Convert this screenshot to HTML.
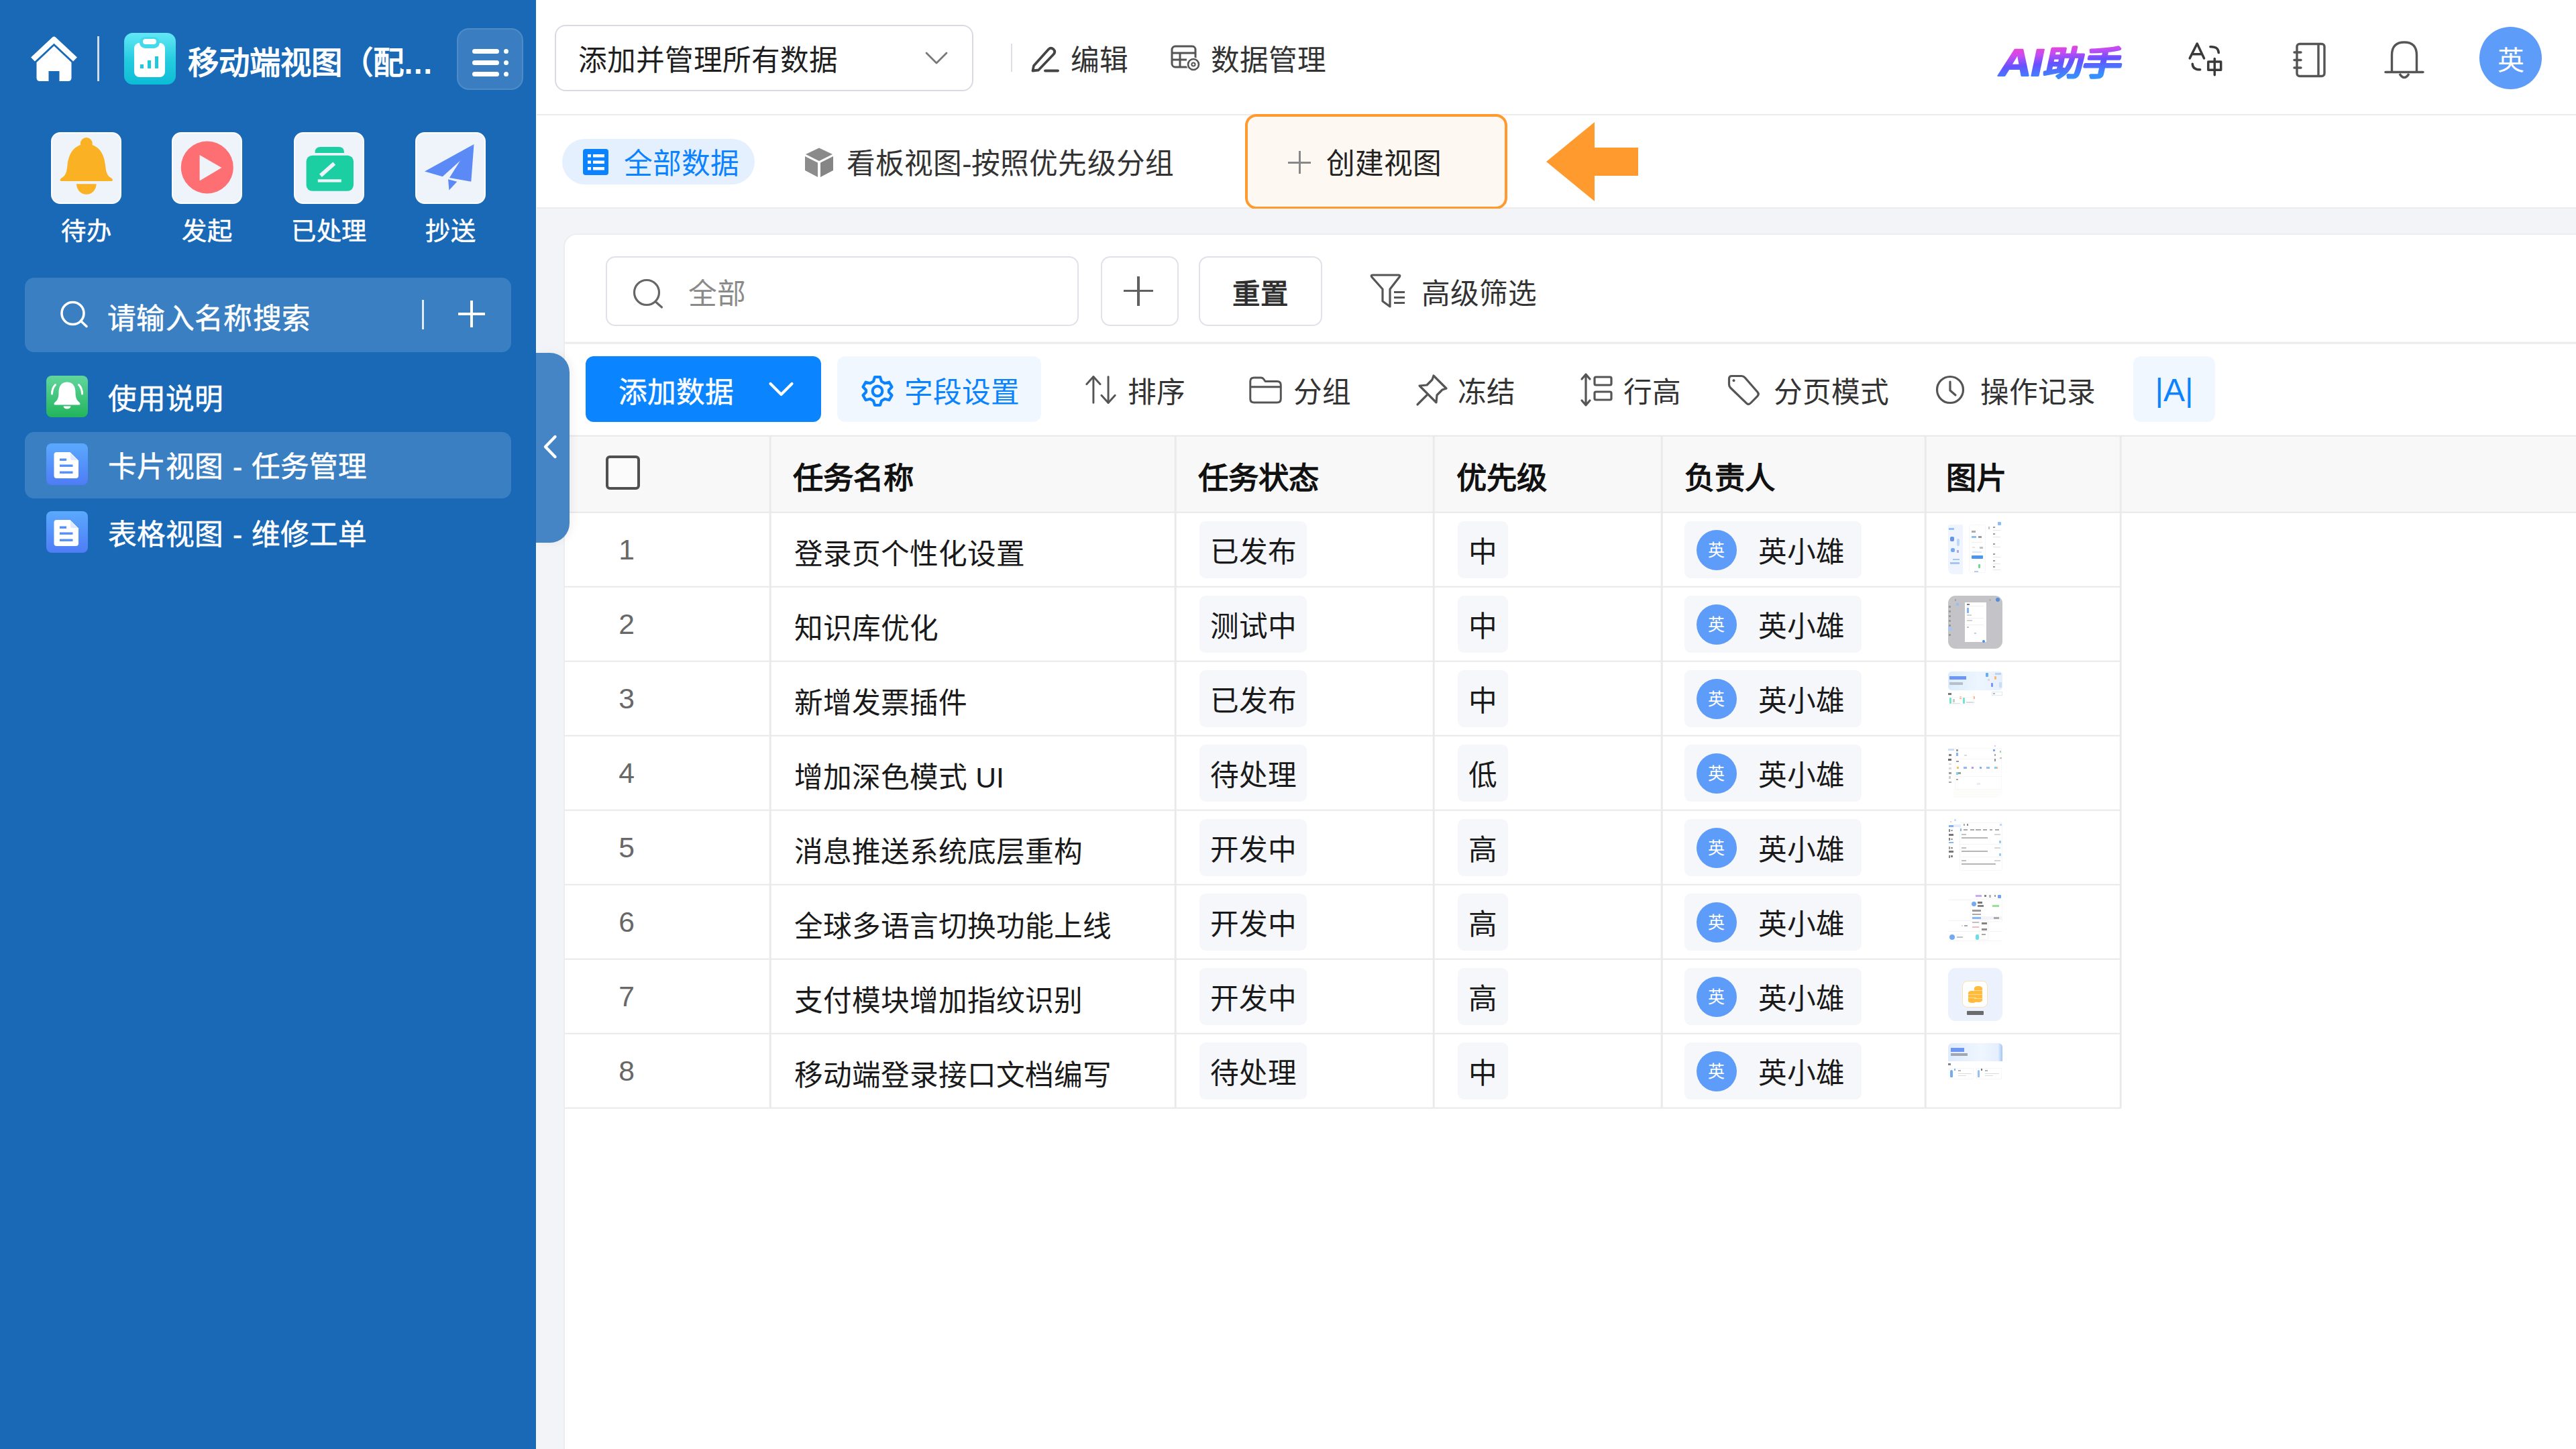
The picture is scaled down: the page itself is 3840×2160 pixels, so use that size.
<!DOCTYPE html>
<html lang="zh-CN">
<head>
<meta charset="utf-8">
<title>移动端视图</title>
<style>
*{box-sizing:border-box;margin:0;padding:0}
html,body{width:3840px;height:2160px;overflow:hidden;background:#fff}
body{font-family:"Liberation Sans",sans-serif;font-size:42.67px;color:#1f1f1f;position:relative;-webkit-font-smoothing:antialiased}
.abs{position:absolute}
.t{position:absolute;white-space:nowrap;line-height:60px;height:60px;margin-top:3px}
svg{position:absolute;overflow:visible}
/* ---------- sidebar ---------- */
#sb{position:absolute;left:0;top:0;width:799px;height:2160px;background:#1969b7;color:#fff;-webkit-text-stroke:.55px #fff}
#sb .ttl{left:280px;top:61px;font-size:46.400px;font-weight:bold;-webkit-text-stroke:0}
#menubtn{left:681px;top:42px;width:99px;height:92px;border-radius:18px;background:rgba(255,255,255,.145);border:2px solid rgba(255,255,255,.10)}
.q{position:absolute;top:197px;width:105px;height:107px;border-radius:14px;background:#eff4fb;border:2px solid #fdfeff}
.ql{position:absolute;top:315px;white-space:nowrap;text-align-last:justify;font-size:37.3px;line-height:60px;height:60px}
#sbsearch{left:37px;top:414px;width:725px;height:111px;border-radius:14px;background:#3b7fc3}
.mi{position:absolute;left:37px;width:725px;height:99px;border-radius:14px}
.mi.on{background:#3b7fc3}
.mi .ic{position:absolute;left:32px;top:17px;width:62px;height:62px;border-radius:8px}
.mi .tx{position:absolute;left:124px;top:22px;line-height:60px;height:60px;white-space:nowrap;word-spacing:2px}
.g1{background:linear-gradient(180deg,#62d69c 0%,#22b45c 100%)}
.g2{background:linear-gradient(180deg,#5aa9fd 0%,#4f7cf6 100%)}
/* ---------- header ---------- */
#hd{position:absolute;left:800px;top:0;width:3040px;height:172px;background:#fff;border-bottom:2px solid #ececee}
#sel{left:827px;top:37px;width:624px;height:99px;border:2px solid #d8dbe4;border-radius:16px;background:#fff}
/* ---------- tabs ---------- */
#tabs{position:absolute;left:800px;top:172px;width:3040px;height:139px;background:#fff;border-bottom:2px solid #ececee}
#pill{left:838px;top:207px;width:287px;height:68px;border-radius:34px;background:#e4f0fe}
#cv{left:1856px;top:170px;width:391px;height:142px;border:4px solid #ff9a2e;border-radius:17px;background:#fef8f2}
/* ---------- content ---------- */
#gut{position:absolute;left:800px;top:311px;width:3040px;height:1849px;background:#f3f4f7}
#card{position:absolute;left:840px;top:348px;width:3010px;height:1830px;background:#fff;border:2px solid #ecedf0;border-radius:20px 0 0 0}
</style>
</head>
<body>
<!-- ================= SIDEBAR ================= -->
<div id="sb">
  <!-- home icon -->
  <svg style="left:44px;top:52px" width="72" height="72" viewBox="44 52 72 72">
    <path d="M49 88.500 L80.500 59 L112 88.500" fill="none" stroke="#fff" stroke-width="8.5" stroke-linejoin="round" stroke-linecap="butt"/>
    <path d="M80.5 68.5 L106.5 93 L106.5 116 Q106.5 121 101.5 121 L88.5 121 L88.5 106 L72.5 106 L72.5 121 L59.5 121 Q54.5 121 54.5 116 L54.5 93 Z" fill="#fff"/>
  </svg>
  <div class="abs" style="left:145px;top:54px;width:3px;height:67px;background:#d3dbe6"></div>
  <!-- app icon -->
  <div class="abs" style="left:185px;top:49px;width:77px;height:77px;border-radius:13px;background:linear-gradient(180deg,#62e8f6 0%,#27cde0 50%,#0cbcd5 100%)">
    <div class="abs" style="left:15px;top:15px;width:46px;height:51px;border-radius:8px;background:#fff"></div>
    <div class="abs" style="left:23px;top:6px;width:30px;height:17px;border-radius:9px;background:#45daeb"></div>
    <div class="abs" style="left:28px;top:9px;width:20px;height:8px;border-radius:4px;background:#fff"></div>
    <div class="abs" style="left:24px;top:47px;width:5px;height:6px;background:#22c8dc"></div>
    <div class="abs" style="left:35px;top:41px;width:5px;height:12px;background:#22c8dc"></div>
    <div class="abs" style="left:46px;top:35px;width:5px;height:18px;background:#22c8dc"></div>
  </div>
  <div class="t ttl" style="width:365.6px;text-align-last:justify">移动端视图（配<span style="letter-spacing:1.500px">...</span></div>
  <div class="abs" id="menubtn">
    <div class="abs" style="left:20.500px;top:28.500px;width:40.500px;height:7px;border-radius:3.500px;background:#fff"></div>
    <div class="abs" style="left:20.500px;top:45.500px;width:40.500px;height:7px;border-radius:3.500px;background:#fff"></div>
    <div class="abs" style="left:20.500px;top:62.500px;width:40.500px;height:7px;border-radius:3.500px;background:#fff"></div>
    <div class="abs" style="left:68px;top:28.500px;width:7px;height:7px;border-radius:3.500px;background:#fff"></div>
    <div class="abs" style="left:68px;top:45.500px;width:7px;height:7px;border-radius:3.500px;background:#fff"></div>
    <div class="abs" style="left:68px;top:62.500px;width:7px;height:7px;border-radius:3.500px;background:#fff"></div>
  </div>

  <!-- quick icons -->
  <div class="q" style="left:76px"></div>
  <div class="q" style="left:256px"></div>
  <div class="q" style="left:438px"></div>
  <div class="q" style="left:619px"></div>
  <svg style="left:0;top:0" width="800" height="320" viewBox="0 0 800 320">
    <!-- bell -->
    <circle cx="128.8" cy="214" r="9" fill="#fbb124"/>
    <path d="M128.8 214 C108 216 102 232 100.5 246 C99.5 256 98 262 92 265 Q89.5 266.5 89.5 268.5 Q89.5 270 92 270 L165.5 270 Q168 270 168 268.5 Q168 266.5 165.5 265 C159.5 262 158 256 157 246 C155.5 232 149.5 216 128.8 214 Z" fill="#fbb124"/>
    <path d="M114 274.3 L143.6 274.3 A14.8 15.4 0 0 1 114 274.3 Z" fill="#fbb124"/>
    <!-- play -->
    <circle cx="308.8" cy="249.5" r="39" fill="#fd6f73"/>
    <path d="M297.6 231 L297.6 269.4 L330.4 250 Z" fill="#eff4fb"/>
    <!-- green -->
    <path d="M469.6 228 L469.6 227 Q469.6 219 478 219 L504.5 219 Q513 219 513 227 L513 228 Z" fill="#1bcfa2"/>
    <rect x="456.6" y="231.7" width="70.4" height="53.1" rx="9" fill="#1bcfa2"/>
    <path d="M476 259.6 L496.4 241.5 L500.2 245.7 L479.8 263.9 Z" fill="#eff4fb"/>
    <rect x="473.8" y="267.3" width="35" height="4.3" fill="#eff4fb"/>
    <!-- plane -->
    <path d="M706.5 215 L633 255.5 L659.7 263.2 L690 236 Z" fill="#5b8af7"/>
    <path d="M706.5 215 L702.3 270.8 L670 265 L686 239.5 Z" fill="#5b8af7"/>
    <path d="M668 267.3 L681.3 270.8 L669.5 283.4 Z" fill="#5b8af7"/>
  </svg>
  <div class="ql" style="left:90.500px;width:75.100px">待办</div>
  <div class="ql" style="left:270.500px;width:75.100px">发起</div>
  <div class="ql" style="left:434px;width:112.400px">已处理</div>
  <div class="ql" style="left:633.500px;width:75.100px">抄送</div>

  <!-- search -->
  <div class="abs" id="sbsearch"></div>
  <svg style="left:88px;top:447px" width="46" height="46" viewBox="0 0 46 46">
    <circle cx="20.5" cy="20" r="16.5" fill="none" stroke="#fff" stroke-width="3.6"/>
    <path d="M32.5 31.5 L41 39.5" stroke="#fff" stroke-width="3.6" stroke-linecap="round"/>
  </svg>
  <div class="t" style="width:303.5px;text-align-last:justify;left:160px;top:442px;letter-spacing:.3px">请输入名称搜索</div>
  <div class="abs" style="left:629px;top:447px;width:3px;height:44px;background:#e3ecf6"></div>
  <div class="abs" style="left:683px;top:466px;width:40px;height:4px;background:#fff"></div>
  <div class="abs" style="left:701px;top:448px;width:4px;height:40px;background:#fff"></div>

  <!-- menu -->
  <div class="mi" style="top:543px">
    <div class="ic g1">
      <svg style="left:0;top:0" width="62" height="62" viewBox="0 0 62 62">
        <path d="M31 9.5 C21 9.500 18.5 18 18.500 25 C18.5 33 16.5 37 12.500 40 Q11.5 41 11.500 42 Q11.5 43.500 13 43.500 L49 43.500 Q50.500 43.500 50.500 42 Q50.500 41 49.500 40 C45.500 37 43.500 33 43.500 25 C43.500 18 41 9.500 31 9.500 Z" fill="#fff"/>
        <path d="M25.500 45.500 L36.500 45.500 Q36 49.500 31 49.500 Q26 49.500 25.500 45.500 Z" fill="#fff"/>
        <path d="M13.500 13.500 Q8.500 19 8.500 27" fill="none" stroke="#fff" stroke-width="3" stroke-linecap="round"/>
        <path d="M48.500 13.500 Q53.500 19 53.500 27" fill="none" stroke="#fff" stroke-width="3" stroke-linecap="round"/>
      </svg>
    </div>
    <div class="tx" style="width:172.4px;text-align-last:justify">使用说明</div>
  </div>
  <div class="mi on" style="top:644px">
    <div class="ic g2">
      <svg style="left:0;top:0" width="62" height="62" viewBox="0 0 62 62">
        <path d="M15.500 13 L35.500 13 L48 25.500 L48 48 Q48 52 44 52 L15.500 52 Q11.500 52 11.500 48 L11.500 17 Q11.500 13 15.500 13 Z" fill="#fff"/>
        <path d="M36 14.500 L36 23 Q36 25 38 25 L46.500 25 Z" fill="#dfeaff"/>
        <rect x="20" y="22.500" width="10" height="3.400" fill="#5590f9"/>
        <rect x="20" y="31.500" width="19.500" height="3.400" fill="#5590f9"/>
        <rect x="20" y="41.500" width="19.500" height="3.400" fill="#5590f9"/>
      </svg>
    </div>
    <div class="tx" style="width:386.3px;text-align-last:justify">卡片视图 - 任务管理</div>
  </div>
  <div class="mi" style="top:745px">
    <div class="ic g2">
      <svg style="left:0;top:0" width="62" height="62" viewBox="0 0 62 62">
        <path d="M15.500 13 L35.500 13 L48 25.500 L48 48 Q48 52 44 52 L15.500 52 Q11.500 52 11.500 48 L11.500 17 Q11.500 13 15.500 13 Z" fill="#fff"/>
        <path d="M36 14.500 L36 23 Q36 25 38 25 L46.500 25 Z" fill="#dfeaff"/>
        <rect x="20" y="22.500" width="10" height="3.400" fill="#5590f9"/>
        <rect x="20" y="31.500" width="19.500" height="3.400" fill="#5590f9"/>
        <rect x="20" y="41.500" width="19.500" height="3.400" fill="#5590f9"/>
      </svg>
    </div>
    <div class="tx" style="width:386.3px;text-align-last:justify">表格视图 - 维修工单</div>
  </div>
</div>

<!-- ================= HEADER ================= -->
<div id="hd"></div>
<div class="abs" id="sel"></div>
<div class="t" style="width:387.4px;text-align-last:justify;left:862px;top:57px">添加并管理所有数据</div>
<svg style="left:1378px;top:76px" width="36" height="22" viewBox="0 0 36 22"><path d="M3 3 L18 18 L33 3" fill="none" stroke="#777" stroke-width="2.800" stroke-linecap="round" stroke-linejoin="round"/></svg>
<div class="abs" style="left:1507px;top:65px;width:2px;height:42px;background:#dcdfe6"></div>
<!-- pencil -->
<svg style="left:1536px;top:65px" width="44" height="44" viewBox="0 0 44 44">
  <path d="M5 33 L27 8.500 Q30.500 5 34.500 8.500 Q38 12 34.500 16 L12 39.500 L3.500 40.500 Z" fill="none" stroke="#444" stroke-width="3.800" stroke-linejoin="round"/>
  <path d="M22 40.500 L41 40.500" stroke="#444" stroke-width="3.800" stroke-linecap="round"/>
</svg>
<div class="t" style="width:86.4px;text-align-last:justify;left:1596px;top:57px;color:#333">编辑</div>
<!-- data mgmt icon -->
<svg style="left:1745px;top:67px" width="46" height="40" viewBox="0 0 46 40">
  <rect x="2" y="2" width="35" height="31" rx="5" fill="none" stroke="#555" stroke-width="3"/>
  <path d="M2 12 L37 12 M2 22 L24 22 M14 12 L14 33" stroke="#555" stroke-width="3" fill="none"/>
  <circle cx="34" cy="29" r="10.500" fill="#fff"/>
  <circle cx="34" cy="29" r="8" fill="none" stroke="#555" stroke-width="2.600"/>
  <circle cx="34" cy="29" r="2.600" fill="none" stroke="#555" stroke-width="2"/>
</svg>
<div class="t" style="width:172.4px;text-align-last:justify;left:1805px;top:57px;color:#333">数据管理</div>

<!-- AI logo -->
<svg style="left:2960px;top:50px" width="230" height="90" viewBox="2960 50 230 90">
  <defs><linearGradient id="aig" x1="0" y1="0.05" x2="0.22" y2="0.95">
    <stop offset="0.08" stop-color="#ff3fc6"/><stop offset="0.36" stop-color="#c44cf2"/><stop offset="0.60" stop-color="#6651ff"/><stop offset="1" stop-color="#3591ff"/></linearGradient></defs>
  <text textLength="157.1" lengthAdjust="spacing" transform="translate(2977,113) skewX(-12) scale(1.17,1)" fill="url(#aig)" stroke="url(#aig)" stroke-width="2.200" stroke-linejoin="round" font-weight="bold" font-family="'Liberation Sans',sans-serif"><tspan font-size="57">AI</tspan><tspan font-size="50" dx="2.500" dy="-1">助手</tspan></text>
</svg>
<!-- translate icon -->
<svg style="left:3260px;top:62px" width="56" height="54" viewBox="0 0 56 54">
  <path d="M4.200 24.900 L15.200 3 L25.600 24.900 M8.400 18.700 L22 18.700" fill="none" stroke="#3a3a3a" stroke-width="3.500" stroke-linecap="round" stroke-linejoin="round"/>
  <path d="M34.900 7.700 Q46.800 7 47.300 16.600" fill="none" stroke="#3a3a3a" stroke-width="3.500" stroke-linecap="round"/>
  <path d="M8.300 33.200 Q8.600 42 19.700 41.800" fill="none" stroke="#3a3a3a" stroke-width="3.500" stroke-linecap="round"/>
  <rect x="31.800" y="30.100" width="18.900" height="12.100" fill="none" stroke="#3a3a3a" stroke-width="3.500" stroke-linejoin="round"/>
  <path d="M41.300 25.600 L41.300 49.800" stroke="#3a3a3a" stroke-width="3.500" stroke-linecap="round"/>
</svg>
<!-- notebook icon -->
<svg style="left:3414px;top:62px" width="56" height="56" viewBox="0 0 56 56">
  <rect x="10" y="3.500" width="41" height="48" rx="4" fill="none" stroke="#555" stroke-width="3.400"/>
  <path d="M42 3.500 L42 51.500" stroke="#555" stroke-width="3.400"/>
  <path d="M6 16 L16 16 M6 27.500 L16 27.500 M6 39 L16 39" stroke="#555" stroke-width="3.400" stroke-linecap="round"/>
</svg>
<!-- bell icon -->
<svg style="left:3552px;top:58px" width="64" height="62" viewBox="0 0 64 62">
  <path d="M13.500 49 L13.500 24 Q13.500 5 32 5 Q50.500 5 50.500 24 L50.500 49" fill="none" stroke="#555" stroke-width="3.400"/>
  <path d="M4 49.500 L60 49.500" stroke="#555" stroke-width="3.400" stroke-linecap="round"/>
  <path d="M25 52 Q32 63 39 52" fill="none" stroke="#555" stroke-width="3.400"/>
</svg>
<div class="abs" style="left:3696px;top:40px;width:93px;height:93px;border-radius:50%;background:#5e9cf9"></div>
<div class="t" style="left:3696px;top:57px;width:93px;text-align:center;color:#fff;font-size:40px">英</div>

<!-- ================= TABS ================= -->
<div id="tabs"></div>
<div class="abs" id="pill"></div>
<svg style="left:869px;top:222px" width="39" height="40" viewBox="0 0 39 40">
  <rect x="0" y="0" width="38" height="39" rx="4" fill="#0b82ff"/>
  <rect x="7" y="8" width="5" height="4.500" fill="#fff"/><rect x="15" y="8" width="17" height="4.500" fill="#fff"/>
  <rect x="7" y="17.500" width="5" height="4.500" fill="#fff"/><rect x="15" y="17.500" width="17" height="4.500" fill="#fff"/>
  <rect x="7" y="27" width="5" height="4.500" fill="#fff"/><rect x="15" y="27" width="17" height="4.500" fill="#fff"/>
</svg>
<div class="t" style="width:172.4px;text-align-last:justify;left:930px;top:211px;color:#0b82ff">全部数据</div>
<svg style="left:1198px;top:219px" width="46" height="46" viewBox="0 0 46 46">
  <path d="M23 1.500 L43 11 L23 21 L3 11 Z" fill="#8a8a8a"/>
  <path d="M2 14 L21 23.500 L21 45 L2 35 Z" fill="#8c8c8c"/>
  <path d="M44 14 L25 23.500 L25 45 L44 35 Z" fill="#858585"/>
</svg>
<div class="t" style="width:487.6px;text-align-last:justify;left:1262px;top:211px;color:#333">看板视图-按照优先级分组</div>
<div class="abs" id="cv"></div>
<div class="abs" style="left:1920px;top:240.500px;width:34px;height:3px;background:#888"></div>
<div class="abs" style="left:1935.500px;top:225px;width:3px;height:34px;background:#888"></div>
<div class="t" style="width:172.4px;text-align-last:justify;left:1977px;top:211px;color:#222">创建视图</div>
<svg style="left:2300px;top:178px" width="150" height="126" viewBox="2300 178 150 126">
  <path d="M2305 241 L2377 182 L2377 220 L2442 220 L2442 262 L2377 262 L2377 300 Z" fill="#ff9a2e"/>
</svg>

<!-- ================= CONTENT ================= -->
<div id="gut"></div>
<div id="card"></div>
<style>
.btn{position:absolute;border:2px solid #dfe2e9;border-radius:14px;background:#fff}
.tb{color:#333}
.hline{position:absolute;height:2.600px;background:#e8e8e8;transform:translateY(-.3px)}
.vline{position:absolute;width:2.600px;background:#eaeaea;transform:translateX(-.3px)}
.th{position:absolute;top:684px;font-size:45.3px;font-weight:bold;color:#111;line-height:60px;height:60px;white-space:nowrap}
.row{position:absolute;left:842px;width:2320px;height:111px}
.row .n{position:absolute;left:0;width:182px;top:26px;text-align:center;color:#686868;line-height:60px;height:60px;padding-left:2px}
.row .nm{position:absolute;left:342px;top:33px;line-height:60px;height:60px;white-space:nowrap;color:#1a1a1a}
.tag{position:absolute;top:14px;height:85px;border-radius:9px;background:#f6f7fa;line-height:60px;padding:16px 0 0 0;text-align:center;white-space:nowrap;color:#1a1a1a}
.pa{position:absolute;left:1686.500px;top:27px;width:60px;height:60px;border-radius:50%;background:#5e9cf9;color:#fff;font-size:25px;line-height:60px;text-align:center}
.pn{position:absolute;left:1779px;top:30px;line-height:60px;height:60px;white-space:nowrap;color:#1a1a1a}
.im{position:absolute;left:2061.500px;top:14px;width:81px;height:79px;border-radius:11px;overflow:hidden;filter:blur(.7px);opacity:.88}
.im i{position:absolute;display:block}
</style>
<!-- filter row -->
<div class="btn" style="left:903px;top:382px;width:705px;height:104px"></div>
<svg style="left:941px;top:414px" width="50" height="48" viewBox="0 0 50 48">
  <circle cx="23" cy="22" r="18.500" fill="none" stroke="#666" stroke-width="3.200"/>
  <path d="M37 36.500 L45.500 44" stroke="#666" stroke-width="3.200" stroke-linecap="round"/>
</svg>
<div class="t" style="width:86.4px;text-align-last:justify;left:1026px;top:405px;color:#8a8a8a">全部</div>
<div class="btn" style="left:1641px;top:382px;width:116px;height:104px"></div>
<div class="abs" style="left:1675px;top:432.300px;width:44px;height:3.200px;background:#606060"></div>
<div class="abs" style="left:1695.400px;top:412px;width:3.200px;height:44px;background:#606060"></div>
<div class="btn" style="left:1787px;top:382px;width:184px;height:104px"></div>
<div class="t" style="left:1837.300px;top:406px;width:83.600px;text-align-last:justify;color:#2e2e2e;-webkit-text-stroke:1.100px #2e2e2e;font-size:41.500px">重置</div>
<svg style="left:2040px;top:404px" width="58" height="60" viewBox="0 0 58 60">
  <path d="M6 6 L45 6 Q48 6 46 9 L32 27 L32 53 L21 45 L21 27 L5 9 Q3 6 6 6 Z" fill="none" stroke="#555" stroke-width="3.200" stroke-linejoin="round"/>
  <path d="M38 31.500 L54 31.500 M38 39.500 L54 39.500 M38 47.500 L54 47.500" stroke="#555" stroke-width="3"/>
</svg>
<div class="t tb" style="width:172.4px;text-align-last:justify;left:2119px;top:405px">高级筛选</div>
<div class="hline" style="left:842px;top:510px;width:2998px;background:#ebebee"></div>

<!-- toolbar -->
<div class="abs" style="left:873px;top:531px;width:351px;height:98px;border-radius:12px;background:#0b84ff"></div>
<div class="t" style="width:172.4px;text-align-last:justify;left:922px;top:552px;color:#fff;-webkit-text-stroke:.45px #fff">添加数据</div>
<svg style="left:1145px;top:568px" width="42" height="26" viewBox="0 0 42 26"><path d="M3.500 4 L19.500 20 L35.500 4" fill="none" stroke="#fff" stroke-width="4.200" stroke-linecap="round" stroke-linejoin="round"/></svg>
<div class="abs" style="left:1248px;top:531px;width:304px;height:98px;border-radius:12px;background:#f0f7ff"></div>
<svg style="left:1282.500px;top:558px" width="50" height="50" viewBox="0 0 50 50">
  <path d="M21 4 L29 4 L31 10.500 L36 13.300 L42.500 11.700 L46.500 18.700 L42 23.500 L42 26.500 L46.500 31.300 L42.500 38.300 L36 36.700 L31 39.500 L29 46 L21 46 L19 39.500 L14 36.700 L7.500 38.300 L3.500 31.300 L8 26.500 L8 23.500 L3.500 18.700 L7.500 11.700 L14 13.300 L19 10.500 Z" fill="none" stroke="#0b83ff" stroke-width="4.200" stroke-linejoin="round"/>
  <circle cx="25" cy="25" r="7.300" fill="none" stroke="#0b83ff" stroke-width="4.200"/>
</svg>
<div class="t" style="width:172.4px;text-align-last:justify;left:1348px;top:552px;color:#0b83ff">字段设置</div>
<!-- sort -->
<svg style="left:1616px;top:557px" width="50" height="48" viewBox="0 0 54 52">
  <path d="M4 17 L15 5 L15 47" fill="none" stroke="#555" stroke-width="3.200" stroke-linecap="round" stroke-linejoin="round"/>
  <path d="M15 5 L26 17" fill="none" stroke="#555" stroke-width="3.200" stroke-linecap="round"/>
  <path d="M28 35 L39 47 L39 5" fill="none" stroke="#555" stroke-width="3.200" stroke-linecap="round" stroke-linejoin="round"/>
  <path d="M39 47 L50 35" fill="none" stroke="#555" stroke-width="3.200" stroke-linecap="round"/>
</svg>
<div class="t tb" style="width:86.4px;text-align-last:justify;left:1681px;top:552px">排序</div>
<!-- group -->
<svg style="left:1861px;top:559px" width="52" height="45" viewBox="0 0 56 48">
  <path d="M3 14 L3 10 Q3 4 9 4 L20 4 Q23 4 25 7 L27 10 L46 10 Q52 10 52 16 L52 38 Q52 44 46 44 L9 44 Q3 44 3 38 Z" fill="none" stroke="#555" stroke-width="3.200" stroke-linejoin="round"/>
  <path d="M3 19 L52 19" stroke="#555" stroke-width="3.200"/>
</svg>
<div class="t tb" style="width:86.4px;text-align-last:justify;left:1928px;top:552px">分组</div>
<!-- pin -->
<svg style="left:2108px;top:556px" width="52" height="52" viewBox="0 0 52 52">
  <path d="M29 4 L48 23 L42 25 L34 33 L33 44 L8 19 L19 18 L27 10 Z" fill="none" stroke="#555" stroke-width="3.200" stroke-linejoin="round"/>
  <path d="M20 32 L5 47" stroke="#555" stroke-width="3.200" stroke-linecap="round"/>
</svg>
<div class="t tb" style="width:86.4px;text-align-last:justify;left:2173px;top:552px">冻结</div>
<!-- row height -->
<svg style="left:2355px;top:555px" width="52" height="52" viewBox="0 0 52 52">
  <path d="M9 4 L9 48 M3 10 L9 3 L15 10 M3 42 L9 49 L15 42" fill="none" stroke="#555" stroke-width="3.200" stroke-linecap="round" stroke-linejoin="round"/>
  <rect x="22" y="7" width="25" height="12" rx="2" fill="none" stroke="#555" stroke-width="3.200"/>
  <rect x="22" y="29" width="25" height="12" rx="2" fill="none" stroke="#555" stroke-width="3.200"/>
</svg>
<div class="t tb" style="width:86.4px;text-align-last:justify;left:2420px;top:552px">行高</div>
<!-- tag -->
<svg style="left:2573px;top:556px" width="52" height="52" viewBox="0 0 52 52">
  <path d="M8.500 4.500 L23 4.500 Q26 4.500 28 6.800 L47 28.500 Q49.500 31.500 47 34.300 L36.500 45 Q33.500 48 30.500 45.200 L6.500 22 Q4.500 20 4.500 17 L4.500 8.500 Q4.500 4.500 8.500 4.500 Z" fill="none" stroke="#555" stroke-width="3.200" stroke-linejoin="round"/>
  <circle cx="11.500" cy="11.200" r="2" fill="#555"/>
</svg>
<div class="t tb" style="width:172.4px;text-align-last:justify;left:2644px;top:552px">分页模式</div>
<!-- clock -->
<svg style="left:2884px;top:558px" width="46" height="46" viewBox="0 0 46 46">
  <circle cx="23" cy="23" r="19.500" fill="none" stroke="#555" stroke-width="3.200"/>
  <path d="M23 11 L23 24 L31 31" fill="none" stroke="#555" stroke-width="3.200" stroke-linecap="round" stroke-linejoin="round"/>
</svg>
<div class="t tb" style="width:172.4px;text-align-last:justify;left:2952px;top:552px">操作记录</div>
<div class="abs" style="left:3180px;top:531px;width:122px;height:98px;border-radius:12px;background:#f0f7ff"></div>
<div class="t" style="left:3180px;top:549px;width:122px;text-align:center;color:#0b83ff;font-size:48px">|A|</div>

<!-- table -->
<div class="abs" style="left:842px;top:650px;width:2998px;height:113px;background:#f8f8f8"></div>
<div class="hline" style="left:842px;top:648.500px;width:2998px"></div>
<div class="hline" style="left:842px;top:762.500px;width:2998px"></div>
<div class="abs" style="left:903px;top:679px;width:51px;height:51px;border:4px solid #505050;border-radius:6px;background:#fbfbfb"></div>
<div class="th" style="width:180.4px;text-align-last:justify;left:1182px">任务名称</div>
<div class="th" style="width:180.4px;text-align-last:justify;left:1786px">任务状态</div>
<div class="th" style="width:135.4px;text-align-last:justify;left:2171px">优先级</div>
<div class="th" style="width:135.4px;text-align-last:justify;left:2511px">负责人</div>
<div class="th" style="width:90.4px;text-align-last:justify;left:2901px">图片</div>
<div class="row" style="top:763px"><div class="n">1</div><div class="nm" style="width:344.4px;text-align-last:justify">登录页个性化设置</div><div class="tag" style="left:946px;width:160px;padding:16px 15.800px 0 15.800px;text-align-last:justify">已发布</div><div class="tag" style="left:1331px;width:74.500px">中</div><div class="tag" style="left:1669px;width:264px"></div><div class="pa">英</div><div class="pn" style="width:129.4px;text-align-last:justify">英小雄</div><div class="im" id="im1" style="opacity:.72;border-radius:0;top:14px"><i style="left:0px;top:5px;width:22px;height:74px;background:#e9f1fe;border-radius:3px 0 0 8px"></i><i style="left:1px;top:10px;width:8px;height:3px;background:#69a8f6;"></i><i style="left:3px;top:23px;width:6px;height:7px;background:#2b6de0;border-radius:2px"></i><i style="left:13px;top:26px;width:4px;height:11px;background:#a3cdf6;border-radius:2px"></i><i style="left:4px;top:40px;width:6px;height:6px;background:#3d8bef;border-radius:2px"></i><i style="left:13px;top:43px;width:3px;height:4px;background:#8e8ad8;"></i><i style="left:7px;top:56px;width:10px;height:2px;background:#7eb2f5;"></i><i style="left:3px;top:61px;width:14px;height:3px;background:#7eb2f5;"></i><i style="left:31px;top:5px;width:25px;height:72px;background:#fff;border:1px solid #f1f3f6;border-radius:2px"></i><i style="left:35px;top:14px;width:6px;height:3px;background:#8d8d8d;"></i><i style="left:35px;top:22px;width:7px;height:3px;background:#62a4f6;"></i><i style="left:45px;top:22px;width:5px;height:3px;background:#777;"></i><i style="left:35px;top:31px;width:16px;height:1px;background:#ececec;"></i><i style="left:36px;top:38px;width:4px;height:2px;background:#ddd;"></i><i style="left:47px;top:38px;width:5px;height:3px;background:#aaa;"></i><i style="left:36px;top:45px;width:14px;height:2px;background:#cfe0f7;"></i><i style="left:35px;top:51px;width:17px;height:5px;background:#0a6fe8;border-radius:1px"></i><i style="left:45px;top:64px;width:3px;height:6px;background:#3ecb6c;border-radius:1px"></i><i style="left:39px;top:74px;width:6px;height:2px;background:#8dbcf6;"></i><i style="left:67px;top:8px;width:3px;height:2px;background:#777;"></i><i style="left:67px;top:13px;width:11px;height:1px;background:#dcdcdc;"></i><i style="left:67px;top:18px;width:3px;height:2px;background:#777;"></i><i style="left:67px;top:23px;width:11px;height:1px;background:#dcdcdc;"></i><i style="left:67px;top:33px;width:3px;height:2px;background:#777;"></i><i style="left:67px;top:38px;width:11px;height:1px;background:#dcdcdc;"></i><i style="left:67px;top:48px;width:3px;height:2px;background:#777;"></i><i style="left:67px;top:53px;width:11px;height:1px;background:#dcdcdc;"></i><i style="left:67px;top:58px;width:3px;height:2px;background:#777;"></i><i style="left:67px;top:63px;width:11px;height:1px;background:#dcdcdc;"></i><i style="left:67px;top:67px;width:3px;height:2px;background:#777;"></i><i style="left:67px;top:72px;width:11px;height:1px;background:#dcdcdc;"></i><i style="left:74px;top:1px;width:5px;height:5px;background:#62a4f6;border-radius:1px"></i><i style="left:60px;top:8px;width:2px;height:4px;background:#aaa;"></i></div></div>
<div class="hline" style="left:842px;top:873.5px;width:2320px"></div>
<div class="row" style="top:874px"><div class="n">2</div><div class="nm" style="width:215.4px;text-align-last:justify">知识库优化</div><div class="tag" style="left:946px;width:160px;padding:16px 15.800px 0 15.800px;text-align-last:justify">测试中</div><div class="tag" style="left:1331px;width:74.500px">中</div><div class="tag" style="left:1669px;width:264px"></div><div class="pa">英</div><div class="pn" style="width:129.4px;text-align-last:justify">英小雄</div><div class="im" id="im2" style="top:14px"><i style="left:0px;top:0px;width:81px;height:79px;background:#bcbdc1;"></i><i style="left:25px;top:10px;width:32px;height:59px;background:#fff;"></i><i style="left:71px;top:3px;width:6px;height:6px;background:#3f7fd6;border-radius:3px"></i><i style="left:51px;top:66px;width:4px;height:4px;background:#2f80ed;border-radius:2px"></i><i style="left:39px;top:55px;width:3px;height:2px;background:#a9c9f6;"></i><i style="left:1px;top:15px;width:3px;height:3px;background:#8a8b90;"></i><i style="left:1px;top:22px;width:3px;height:3px;background:#8a8b90;"></i><i style="left:1px;top:29px;width:3px;height:3px;background:#8a8b90;"></i><i style="left:1px;top:36px;width:3px;height:3px;background:#8a8b90;"></i><i style="left:1px;top:43px;width:3px;height:3px;background:#8a8b90;"></i><i style="left:1px;top:57px;width:3px;height:3px;background:#8a8b90;"></i><i style="left:0px;top:47px;width:6px;height:5px;background:#9dbdf0;"></i><i style="left:12px;top:11px;width:4px;height:4px;background:#8fb4ee;"></i><i style="left:10px;top:5px;width:2px;height:3px;background:#999;"></i><i style="left:61px;top:5px;width:3px;height:3px;background:#aaa;"></i><i style="left:28px;top:12px;width:4px;height:2px;background:#666;"></i><i style="left:28px;top:18px;width:3px;height:8px;background:#73a9f6;"></i><i style="left:28px;top:28px;width:7px;height:2px;background:#ccc;"></i><i style="left:28px;top:36px;width:8px;height:2px;background:#ccc;"></i><i style="left:28px;top:46px;width:3px;height:2px;background:#bbb;"></i><i style="left:27px;top:15px;width:26px;height:1px;background:#eee;"></i><i style="left:27px;top:33px;width:26px;height:1px;background:#eee;"></i><i style="left:27px;top:43px;width:26px;height:1px;background:#eee;"></i></div></div>
<div class="hline" style="left:842px;top:984.5px;width:2320px"></div>
<div class="row" style="top:985px"><div class="n">3</div><div class="nm" style="width:258.4px;text-align-last:justify">新增发票插件</div><div class="tag" style="left:946px;width:160px;padding:16px 15.800px 0 15.800px;text-align-last:justify">已发布</div><div class="tag" style="left:1331px;width:74.500px">中</div><div class="tag" style="left:1669px;width:264px"></div><div class="pa">英</div><div class="pn" style="width:129.4px;text-align-last:justify">英小雄</div><div class="im" id="im3" style="opacity:.72;border-radius:0;top:15px"><i style="left:0px;top:1px;width:81px;height:28px;background:linear-gradient(90deg,#cfe6fc 0%,#e6f3fe 55%,#dfeafd 100%);border-radius:5px"></i><i style="left:2px;top:8px;width:25px;height:5px;background:#3a6ff0;"></i><i style="left:2px;top:17px;width:20px;height:4px;background:#9aa7b8;"></i><i style="left:56px;top:3px;width:4px;height:6px;background:#2f8df0;border-radius:1px"></i><i style="left:69px;top:8px;width:3px;height:5px;background:#f5a040;border-radius:1px"></i><i style="left:64px;top:18px;width:3px;height:6px;background:#4a6cf0;border-radius:1px"></i><i style="left:70px;top:3px;width:9px;height:3px;background:#9dc3f7;"></i><i style="left:59px;top:12px;width:3px;height:3px;background:#d8c8c0;"></i><i style="left:76px;top:17px;width:4px;height:8px;background:#b8d0ee;"></i><i style="left:0px;top:33px;width:5px;height:3px;background:#444;"></i><i style="left:65px;top:31px;width:16px;height:6px;background:#fff;border:1px solid #cfe1fa"></i><i style="left:67px;top:33px;width:3px;height:2px;background:#999;"></i><i style="left:2px;top:40px;width:3px;height:9px;background:#40d9c0;border-radius:1px"></i><i style="left:22px;top:40px;width:3px;height:9px;background:#40d9c0;border-radius:1px"></i><i style="left:17px;top:38px;width:3px;height:4px;background:#ff9560;border-radius:1px"></i><i style="left:37px;top:38px;width:3px;height:4px;background:#ff9560;border-radius:1px"></i><i style="left:7px;top:42px;width:3px;height:5px;background:#bbb;"></i><i style="left:6px;top:48px;width:12px;height:1px;background:#ccc;"></i><i style="left:27px;top:46px;width:12px;height:2px;background:#ccc;"></i><i style="left:1px;top:39px;width:37px;height:12px;background:transparent;border:1px solid #f4f4f4"></i></div></div>
<div class="hline" style="left:842px;top:1095.5px;width:2320px"></div>
<div class="row" style="top:1096px"><div class="n">4</div><div class="nm" style="width:312.9px;text-align-last:justify">增加深色模式 UI</div><div class="tag" style="left:946px;width:160px;padding:16px 15.800px 0 15.800px;text-align-last:justify">待处理</div><div class="tag" style="left:1331px;width:74.500px">低</div><div class="tag" style="left:1669px;width:264px"></div><div class="pa">英</div><div class="pn" style="width:129.4px;text-align-last:justify">英小雄</div><div class="im" id="im4" style="opacity:.72;border-radius:0;top:15px"><i style="left:10px;top:4px;width:70px;height:62px;background:#fff;border:1px solid #f6f6f6"></i><i style="left:8px;top:66px;width:73px;height:12px;background:#fbfbfa;border-radius:0 0 10px 0"></i><i style="left:0px;top:5px;width:9px;height:3px;background:#b8d4f8;"></i><i style="left:1px;top:13px;width:4px;height:3px;background:#555;"></i><i style="left:0px;top:20px;width:5px;height:3px;background:#333;"></i><i style="left:1px;top:27px;width:4px;height:2px;background:#ccc;"></i><i style="left:1px;top:33px;width:4px;height:3px;background:#ccc;"></i><i style="left:1px;top:40px;width:4px;height:3px;background:#777;"></i><i style="left:1px;top:46px;width:3px;height:4px;background:#bbb;"></i><i style="left:1px;top:54px;width:4px;height:2px;background:#888;"></i><i style="left:12px;top:6px;width:3px;height:3px;background:#777;"></i><i style="left:12px;top:11px;width:3px;height:5px;background:#5a96f0;"></i><i style="left:24px;top:14px;width:4px;height:2px;background:#ccc;"></i><i style="left:12px;top:23px;width:4px;height:2px;background:#777;"></i><i style="left:10px;top:20px;width:70px;height:1px;background:#f3f3f3;"></i><i style="left:10px;top:46px;width:70px;height:1px;background:#f3f3f3;"></i><i style="left:13px;top:32px;width:3px;height:3px;background:#f5a623;"></i><i style="left:23px;top:32px;width:5px;height:3px;background:#6c9cf5;"></i><i style="left:35px;top:32px;width:3px;height:3px;background:#9b6cf0;"></i><i style="left:47px;top:32px;width:3px;height:3px;background:#5a8cf5;"></i><i style="left:57px;top:32px;width:5px;height:3px;background:#7aa6f5;"></i><i style="left:69px;top:32px;width:3px;height:3px;background:#40c8d8;"></i><i style="left:72px;top:32px;width:2px;height:3px;background:#f59a70;"></i><i style="left:12px;top:40px;width:3px;height:4px;background:#40c8e8;"></i><i style="left:15px;top:40px;width:4px;height:3px;background:#777;"></i><i style="left:12px;top:50px;width:3px;height:2px;background:#888;"></i><i style="left:43px;top:56px;width:5px;height:3px;background:#dbe7f8;"></i><i style="left:67px;top:6px;width:3px;height:3px;background:#4a8cf0;"></i><i style="left:77px;top:8px;width:2px;height:3px;background:#6fd86f;"></i><i style="left:69px;top:-1px;width:2px;height:3px;background:#d8a8f5;"></i><i style="left:69px;top:13px;width:2px;height:3px;background:#888;"></i><i style="left:69px;top:20px;width:2px;height:4px;background:#666;"></i><i style="left:77px;top:18px;width:3px;height:2px;background:#aaa;"></i></div></div>
<div class="hline" style="left:842px;top:1206.5px;width:2320px"></div>
<div class="row" style="top:1207px"><div class="n">5</div><div class="nm" style="width:430.4px;text-align-last:justify">消息推送系统底层重构</div><div class="tag" style="left:946px;width:160px;padding:16px 15.800px 0 15.800px;text-align-last:justify">开发中</div><div class="tag" style="left:1331px;width:74.500px">高</div><div class="tag" style="left:1669px;width:264px"></div><div class="pa">英</div><div class="pn" style="width:129.4px;text-align-last:justify">英小雄</div><div class="im" id="im5" style="opacity:.72;border-radius:0;top:13px"><i style="left:17px;top:6px;width:64px;height:72px;background:#fff;border:1px solid #f1f3f7;border-radius:2px"></i><i style="left:1px;top:10px;width:7px;height:3px;background:#4a90f0;"></i><i style="left:8px;top:9px;width:11px;height:4px;background:#dbe9fc;"></i><i style="left:1px;top:16px;width:2px;height:4px;background:#555;"></i><i style="left:4px;top:17px;width:3px;height:2px;background:#888;"></i><i style="left:1px;top:23px;width:7px;height:3px;background:#444;"></i><i style="left:1px;top:29px;width:2px;height:4px;background:#555;"></i><i style="left:4px;top:30px;width:3px;height:2px;background:#888;"></i><i style="left:1px;top:35px;width:7px;height:2px;background:#5a9cf5;"></i><i style="left:1px;top:42px;width:2px;height:4px;background:#777;"></i><i style="left:4px;top:43px;width:3px;height:2px;background:#666;"></i><i style="left:1px;top:48px;width:7px;height:3px;background:#444;"></i><i style="left:1px;top:55px;width:2px;height:4px;background:#555;"></i><i style="left:4px;top:55px;width:3px;height:3px;background:#555;"></i><i style="left:9px;top:1px;width:3px;height:3px;background:#b8d4f8;"></i><i style="left:3px;top:4px;width:2px;height:2px;background:#ccc;"></i><i style="left:23px;top:8px;width:2px;height:3px;background:#888;"></i><i style="left:28px;top:8px;width:2px;height:3px;background:#666;"></i><i style="left:77px;top:8px;width:3px;height:3px;background:#a8c8f8;"></i><i style="left:23px;top:16px;width:6px;height:2px;background:#8a8a8a;"></i><i style="left:33px;top:16px;width:6px;height:2px;background:#8a8a8a;"></i><i style="left:41px;top:16px;width:8px;height:2px;background:#8a8a8a;"></i><i style="left:52px;top:16px;width:6px;height:2px;background:#8a8a8a;"></i><i style="left:62px;top:16px;width:4px;height:2px;background:#8a8a8a;"></i><i style="left:70px;top:16px;width:6px;height:2px;background:#8a8a8a;"></i><i style="left:18px;top:15px;width:2px;height:4px;background:#5a9cf5;"></i><i style="left:20px;top:23px;width:7px;height:2px;background:#aaa;"></i><i style="left:69px;top:23px;width:9px;height:2px;background:#c8c8c8;"></i><i style="left:20px;top:28px;width:39px;height:2px;background:#999;"></i><i style="left:20px;top:43px;width:7px;height:2px;background:#aaa;"></i><i style="left:69px;top:43px;width:9px;height:2px;background:#c8c8c8;"></i><i style="left:20px;top:48px;width:39px;height:2px;background:#999;"></i><i style="left:20px;top:62px;width:7px;height:2px;background:#aaa;"></i><i style="left:69px;top:62px;width:9px;height:2px;background:#c8c8c8;"></i><i style="left:20px;top:67px;width:51px;height:2px;background:#999;"></i><i style="left:76px;top:33px;width:3px;height:4px;background:#7aaef5;border-radius:1px"></i><i style="left:76px;top:52px;width:3px;height:4px;background:#7aaef5;border-radius:1px"></i><i style="left:18px;top:38px;width:62px;height:1px;background:#eef0f4;"></i><i style="left:18px;top:57px;width:62px;height:1px;background:#eef0f4;"></i></div></div>
<div class="hline" style="left:842px;top:1317.5px;width:2320px"></div>
<div class="row" style="top:1318px"><div class="n">6</div><div class="nm" style="width:473.4px;text-align-last:justify">全球多语言切换功能上线</div><div class="tag" style="left:946px;width:160px;padding:16px 15.800px 0 15.800px;text-align-last:justify">开发中</div><div class="tag" style="left:1331px;width:74.500px">高</div><div class="tag" style="left:1669px;width:264px"></div><div class="pa">英</div><div class="pn" style="width:129.4px;text-align-last:justify">英小雄</div><div class="im" id="im6" style="opacity:.72;border-radius:0;top:14px"><i style="left:41px;top:2px;width:9px;height:3px;background:#b08cf5;"></i><i style="left:54px;top:2px;width:3px;height:3px;background:#555;"></i><i style="left:61px;top:2px;width:3px;height:4px;background:#999;"></i><i style="left:69px;top:2px;width:2px;height:3px;background:#777;"></i><i style="left:74px;top:2px;width:5px;height:5px;background:#3d7fe8;border-radius:1px"></i><i style="left:1px;top:9px;width:80px;height:1px;background:#eee;"></i><i style="left:1px;top:40px;width:80px;height:1px;background:#eee;"></i><i style="left:34px;top:9px;width:46px;height:32px;background:#fff;box-shadow:0 0 3px rgba(0,0,0,.12)"></i><i style="left:35px;top:12px;width:7px;height:7px;background:#3d8bf0;border-radius:4px"></i><i style="left:44px;top:12px;width:7px;height:3px;background:#444;"></i><i style="left:44px;top:17px;width:9px;height:3px;background:#555;"></i><i style="left:66px;top:17px;width:10px;height:3px;background:#6fd86f;"></i><i style="left:36px;top:24px;width:13px;height:3px;background:#777;"></i><i style="left:36px;top:30px;width:13px;height:2px;background:#888;"></i><i style="left:35px;top:34px;width:45px;height:5px;background:#eef1f5;"></i><i style="left:36px;top:35px;width:13px;height:3px;background:#5a9cf5;"></i><i style="left:68px;top:35px;width:8px;height:3px;background:#8a8a8a;"></i><i style="left:47px;top:41px;width:12px;height:27px;background:#fff;box-shadow:0 0 3px rgba(0,0,0,.14)"></i><i style="left:36px;top:42px;width:10px;height:2px;background:#aaa;"></i><i style="left:50px;top:43px;width:8px;height:3px;background:#555;"></i><i style="left:50px;top:52px;width:8px;height:3px;background:#666;"></i><i style="left:50px;top:60px;width:6px;height:2px;background:#888;"></i><i style="left:36px;top:49px;width:10px;height:2px;background:#f5a0a0;"></i><i style="left:20px;top:47px;width:2px;height:2px;background:#ccc;"></i><i style="left:24px;top:47px;width:5px;height:2px;background:#888;"></i><i style="left:1px;top:56px;width:80px;height:1px;background:#f1f1f1;"></i><i style="left:2px;top:61px;width:8px;height:8px;background:#3d8bf0;border-radius:4px"></i><i style="left:13px;top:64px;width:9px;height:2px;background:#aaa;"></i><i style="left:41px;top:61px;width:5px;height:8px;background:#30d5e0;border-radius:2px"></i><i style="left:1px;top:70px;width:80px;height:1px;background:#f1f1f1;"></i></div></div>
<div class="hline" style="left:842px;top:1428.5px;width:2320px"></div>
<div class="row" style="top:1429px"><div class="n">7</div><div class="nm" style="width:430.4px;text-align-last:justify">支付模块增加指纹识别</div><div class="tag" style="left:946px;width:160px;padding:16px 15.800px 0 15.800px;text-align-last:justify">开发中</div><div class="tag" style="left:1331px;width:74.500px">高</div><div class="tag" style="left:1669px;width:264px"></div><div class="pa">英</div><div class="pn" style="width:129.4px;text-align-last:justify">英小雄</div><div class="im" id="im7" style="top:14px"><i style="left:0px;top:0px;width:81px;height:79px;background:#e9f1fe;"></i><i style="left:21px;top:19px;width:38px;height:40px;background:#fff;border:1px solid #fbdca8;border-radius:8px"></i><i style="left:30px;top:34px;width:12px;height:18px;background:#ffb21e;border-radius:5px/3px"></i><i style="left:39px;top:27px;width:12px;height:24px;background:#ffb21e;border-radius:5px/3px"></i><i style="left:30px;top:39px;width:12px;height:1px;background:#ffd98a;"></i><i style="left:30px;top:44px;width:12px;height:1px;background:#ffd98a;"></i><i style="left:39px;top:33px;width:12px;height:1px;background:#ffd98a;"></i><i style="left:39px;top:39px;width:12px;height:1px;background:#ffd98a;"></i><i style="left:39px;top:45px;width:12px;height:1px;background:#ffd98a;"></i><i style="left:28px;top:64px;width:25px;height:6px;background:#3c3c3c;border-radius:1px;opacity:.85"></i></div></div>
<div class="hline" style="left:842px;top:1539.5px;width:2320px"></div>
<div class="row" style="top:1540px"><div class="n">8</div><div class="nm" style="width:473.4px;text-align-last:justify">移动端登录接口文档编写</div><div class="tag" style="left:946px;width:160px;padding:16px 15.800px 0 15.800px;text-align-last:justify">待处理</div><div class="tag" style="left:1331px;width:74.500px">中</div><div class="tag" style="left:1669px;width:264px"></div><div class="pa">英</div><div class="pn" style="width:129.4px;text-align-last:justify">英小雄</div><div class="im" id="im8" style="opacity:.72;border-radius:0;top:15px"><i style="left:0px;top:0px;width:81px;height:27px;background:linear-gradient(90deg,#d3e5fd 0%,#e9f3fe 60%,#dbe9fd 92%,#7fb0f5 100%);border-radius:6px 6px 0 0"></i><i style="left:4px;top:7px;width:20px;height:6px;background:#3a6ff0;"></i><i style="left:4px;top:15px;width:25px;height:4px;background:#7d8694;"></i><i style="left:0px;top:30px;width:4px;height:3px;background:#555;"></i><i style="left:3px;top:40px;width:4px;height:11px;background:#3d8bf0;border-radius:2px 2px 1px 1px"></i><i style="left:9px;top:38px;width:2px;height:3px;background:#5a9cf5;"></i><i style="left:15px;top:40px;width:4px;height:2px;background:#999;"></i><i style="left:15px;top:45px;width:20px;height:1px;background:#ccc;"></i><i style="left:15px;top:48px;width:12px;height:1px;background:#ccc;"></i><i style="left:1px;top:37px;width:37px;height:17px;background:transparent;border:1px solid #f3f4f6"></i><i style="left:44px;top:40px;width:3px;height:11px;background:#6ea6f5;border-radius:2px 2px 1px 1px"></i><i style="left:49px;top:38px;width:2px;height:3px;background:#444;"></i><i style="left:55px;top:40px;width:4px;height:2px;background:#999;"></i><i style="left:55px;top:45px;width:21px;height:1px;background:#ccc;"></i><i style="left:55px;top:48px;width:12px;height:1px;background:#ccc;"></i><i style="left:42px;top:37px;width:38px;height:17px;background:transparent;border:1px solid #f3f4f6"></i></div></div>
<div class="hline" style="left:842px;top:1650.5px;width:2320px"></div>
<div class="vline" style="left:1147px;top:650px;height:1002px"></div>
<div class="vline" style="left:1751px;top:650px;height:1002px"></div>
<div class="vline" style="left:2136px;top:650px;height:1002px"></div>
<div class="vline" style="left:2476px;top:650px;height:1002px"></div>
<div class="vline" style="left:2869px;top:650px;height:1002px"></div>
<div class="vline" style="left:3160px;top:650px;height:1002px"></div>

<!-- collapse handle -->
<div class="abs" style="left:799px;top:526px;width:49.500px;height:283px;border-radius:0 29px 29px 0;background:#4585c6;box-shadow:5px 0 12px rgba(0,0,0,.05)"></div>
<svg style="left:807px;top:647px" width="26" height="38" viewBox="0 0 26 38"><path d="M20.500 4 L6 19 L20.500 34" fill="none" stroke="#fff" stroke-width="4.400" stroke-linecap="round" stroke-linejoin="round"/></svg>

</body>
</html>
